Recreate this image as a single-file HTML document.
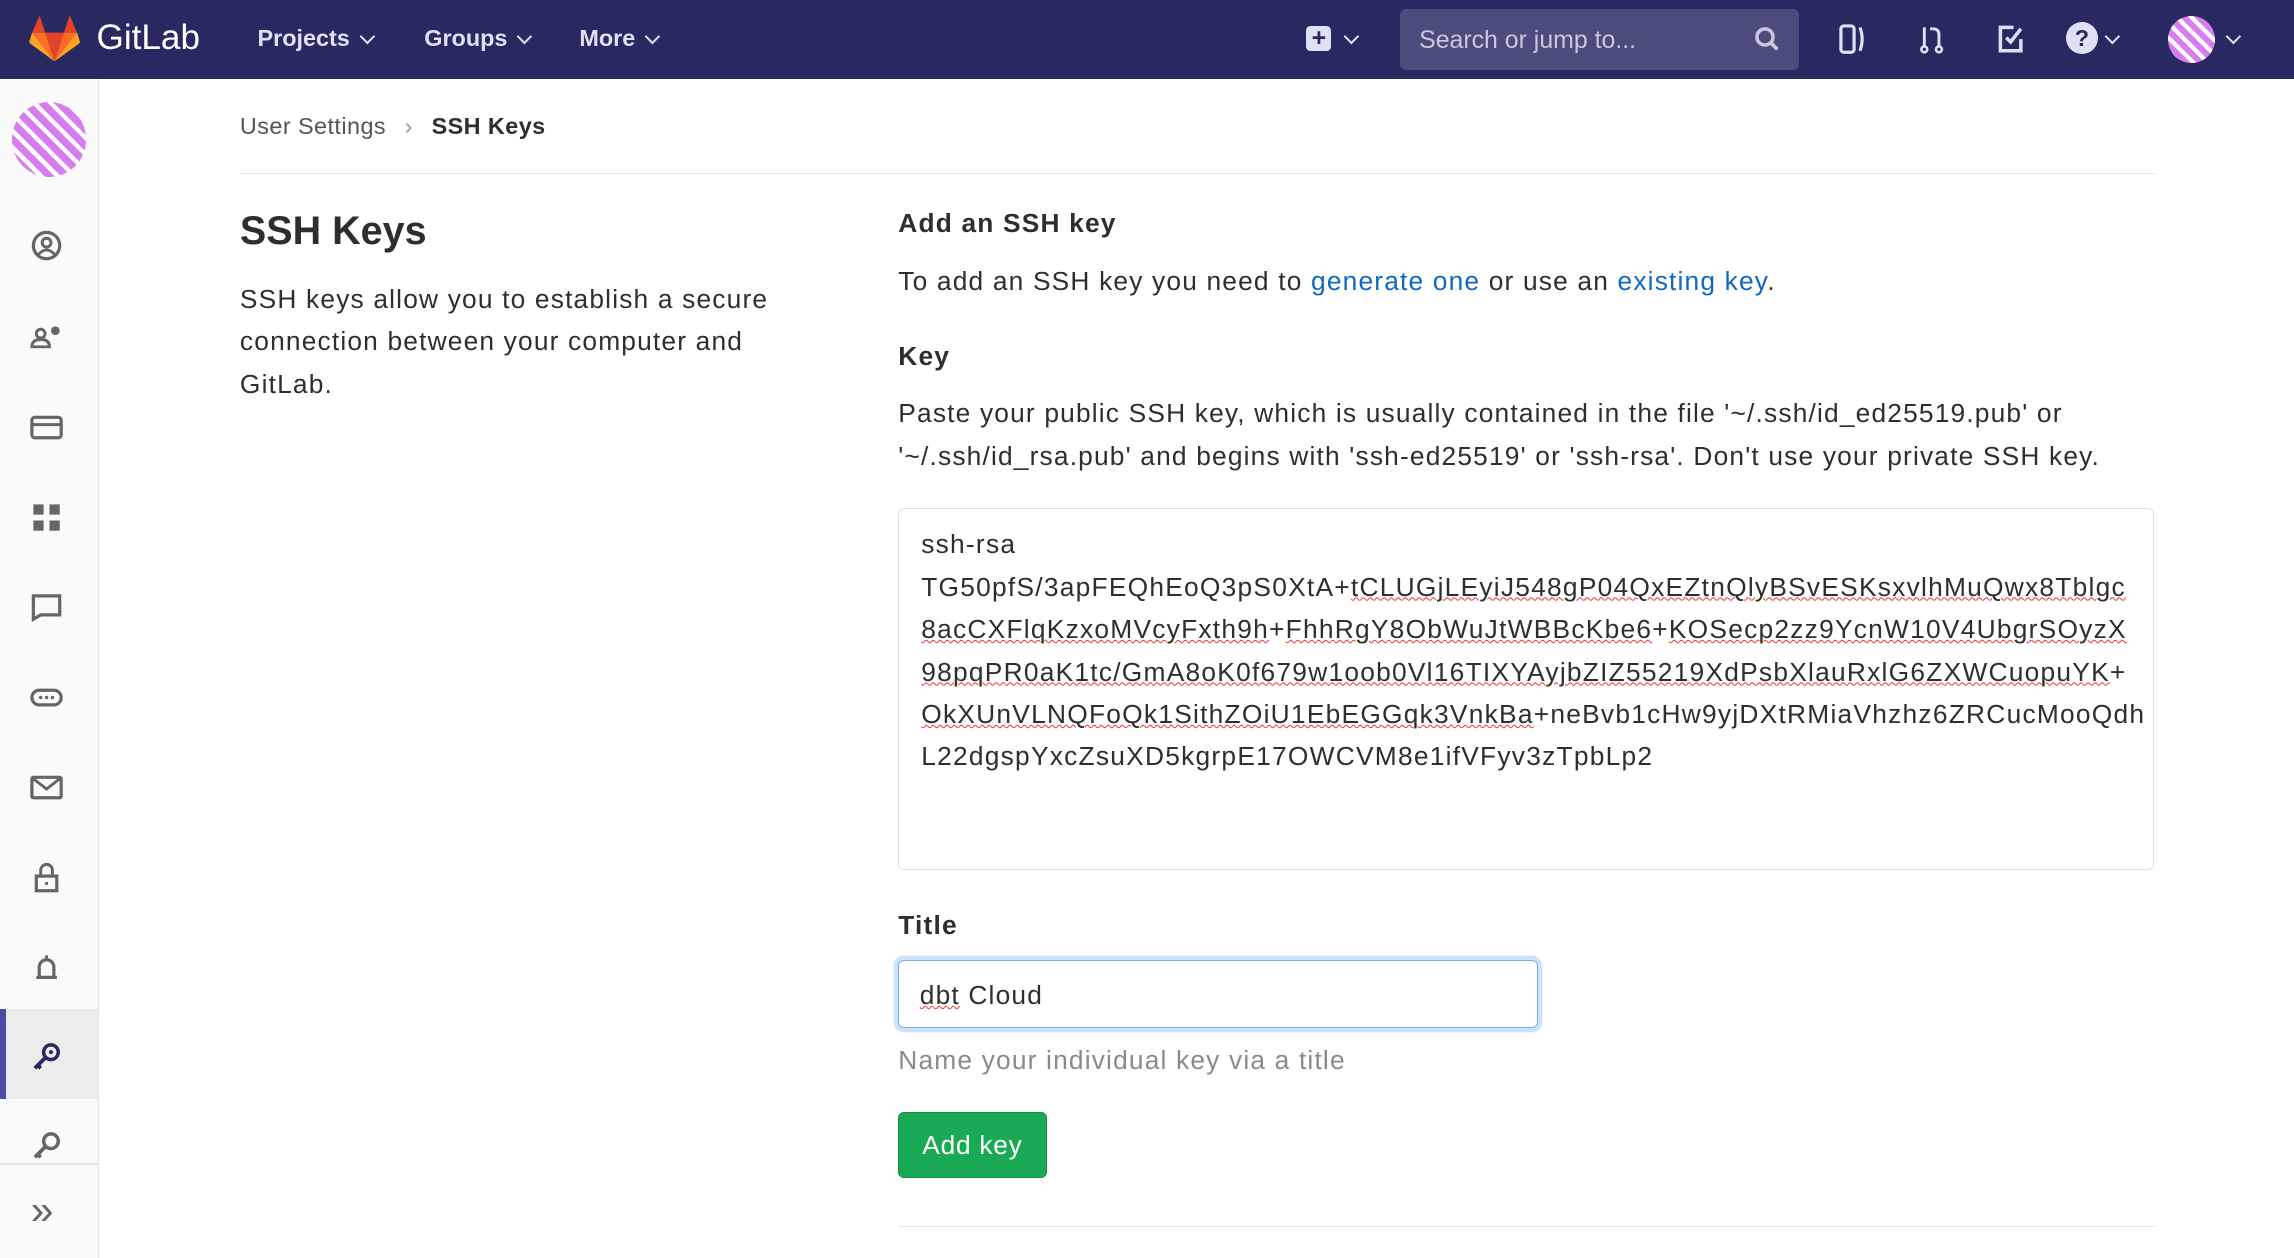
<!DOCTYPE html>
<html><head><meta charset="utf-8"><style>
html,body{margin:0;padding:0;}
body{width:1568px;height:860px;zoom:1.46301;overflow:hidden;font-family:"Liberation Sans",sans-serif;color:#2e2e2e;background:#fff;position:relative;}
.hdr{position:absolute;left:0;top:0;width:1568px;height:54px;background:#292961;color:#fff;}
.hdr .nav{position:absolute;top:17px;font-size:16px;font-weight:bold;color:#e0e0f5;}
.chev{display:inline-block;width:6px;height:6px;border-right:1.6px solid currentColor;border-bottom:1.6px solid currentColor;transform:rotate(45deg);margin-left:8px;position:relative;top:-3px;}
.search{position:absolute;left:957px;top:6px;width:273px;height:42px;background:#4b4b7c;border-radius:4px;}
.search span{position:absolute;left:13px;top:12px;font-size:17px;color:#c8c8dc;}
.side{position:absolute;left:0;top:54px;width:67px;height:806px;background:#fafafa;border-right:1px solid #e5e5e5;}
.ico{position:absolute;left:20px;width:24px;height:24px;}
.crumb{position:absolute;left:164px;top:77px;font-size:16px;color:#555;letter-spacing:0.3px;}
.line{position:absolute;height:1px;background:#e5e5e5;}
h2{position:absolute;left:164px;top:143px;margin:0;font-size:27px;font-weight:bold;}
.p{position:absolute;font-size:18px;line-height:29px;letter-spacing:0.8px;white-space:nowrap;}
a{color:#1068bf;text-decoration:none;}
.ta{position:absolute;left:614px;top:347px;width:857px;height:246px;border:1px solid #dfdfdf;border-radius:4px;}
.ta div{position:absolute;left:15px;top:10px;font-size:18px;line-height:29px;color:#2e2e2e;letter-spacing:0.85px;white-space:nowrap;}
.sq{text-decoration:underline wavy #e33;text-decoration-thickness:1px;}
.inp{position:absolute;left:614px;top:656px;width:436px;height:45px;border:1px solid #73afea;border-radius:4px;box-shadow:0 0 0 3px #cde3f9;}
.btn{position:absolute;left:614px;top:760px;width:100px;height:44px;background:#1aaa55;border:1px solid #168f48;border-radius:4px;color:#fff;font-size:18px;line-height:44px;text-align:center;letter-spacing:0.5px;}
</style></head><body>
<div class="hdr">
 <svg style="position:absolute;left:20px;top:11px" width="35" height="32" viewBox="0 0 36 33"><path d="M18 32L24.6 11.7H11.4Z" fill="#e24329"/><path d="M18 32L11.4 11.7H2.2Z" fill="#fc6d26"/><path d="M2.2 11.7L0.2 17.9a1.4 1.4 0 0 0 .5 1.5L18 32Z" fill="#fca326"/><path d="M2.2 11.7H11.4L7.4 -0.5 Z" fill="#e24329"/><path d="M18 32L24.6 11.7H33.8Z" fill="#fc6d26"/><path d="M33.8 11.7L35.8 17.9a1.4 1.4 0 0 1-.5 1.5L18 32Z" fill="#fca326"/><path d="M33.8 11.7H24.6L28.6 -0.5Z" fill="#e24329"/></svg>
 <div style="position:absolute;left:66px;top:12px;font-size:24px;color:#fff">GitLab</div>
 <div class="nav" style="left:176px">Projects<span class="chev"></span></div>
 <div class="nav" style="left:290px">Groups<span class="chev"></span></div>
 <div class="nav" style="left:396px">More<span class="chev"></span></div>
 <div style="position:absolute;left:893px;top:18px;width:17px;height:17px;background:#e0e0f5;border-radius:3px;color:#292961;font-weight:bold;font-size:17px;line-height:17px;text-align:center">+</div>
 <div class="nav" style="left:912px"><span class="chev"></span></div>
 <div class="search"><span>Search or jump to...</span>
  <svg style="position:absolute;left:242px;top:12px" width="18" height="18" viewBox="0 0 18 18"><circle cx="7.5" cy="7.5" r="5.5" fill="none" stroke="#c8c8dc" stroke-width="2.4"/><path d="M11.5 11.5L16 16" stroke="#c8c8dc" stroke-width="2.6"/></svg></div>
 <svg style="position:absolute;left:1256px;top:16px" width="20" height="22" viewBox="0 0 20 22"><rect x="2" y="2" width="9" height="18" rx="2" fill="none" stroke="#e0e0f5" stroke-width="2.2"/><path d="M15 3q3 8 0 16" fill="none" stroke="#e0e0f5" stroke-width="2.2"/></svg>
 <svg style="position:absolute;left:1310px;top:16px" width="20" height="22" viewBox="0 0 20 22"><circle cx="5" cy="18" r="2" fill="none" stroke="#e0e0f5" stroke-width="1.8"/><circle cx="15" cy="18" r="2" fill="none" stroke="#e0e0f5" stroke-width="1.8"/><path d="M5 3v13M15 16V8q0-4-4-4H9" fill="none" stroke="#e0e0f5" stroke-width="2"/></svg>
 <svg style="position:absolute;left:1364px;top:16px" width="20" height="22" viewBox="0 0 20 22"><path d="M12 3H3v16h14v-8" fill="none" stroke="#e0e0f5" stroke-width="2.4"/><path d="M7 10l3 3 7-9" fill="none" stroke="#e0e0f5" stroke-width="2.4"/></svg>
 <div style="position:absolute;left:1412px;top:15px;width:22px;height:22px;border-radius:50%;background:#e0e0f5;color:#292961;font-weight:bold;font-size:16px;line-height:22px;text-align:center">?</div>
 <div class="nav" style="left:1432px"><span class="chev"></span></div>
 <div style="position:absolute;left:1482px;top:11px;width:32px;height:32px;border-radius:50%;background:repeating-linear-gradient(45deg,#d87cf0 0 4px,#fff 4px 7px),#d87cf0"></div>
 <div class="nav" style="left:1515px"><span class="chev"></span></div>
</div>
<div class="side">
 <div style="position:absolute;left:8px;top:16px;width:51px;height:51px;border-radius:50%;background:repeating-linear-gradient(45deg,#d87cf0 0 5px,#fff 5px 8px),#d87cf0;"></div>
 <svg class="ico" style="top:102px" viewBox="0 0 24 24"><circle cx="12" cy="12" r="9" fill="none" stroke="#666" stroke-width="2.2"/><circle cx="12" cy="10" r="3" fill="none" stroke="#666" stroke-width="2"/><path d="M6.5 18q5.5-6 11 0" fill="none" stroke="#666" stroke-width="2"/></svg>
 <svg class="ico" style="top:164px" viewBox="0 0 24 24"><circle cx="8" cy="10" r="3" fill="none" stroke="#666" stroke-width="2"/><path d="M2 19q0-5 6-5t6 5z" fill="none" stroke="#666" stroke-width="2"/><circle cx="18" cy="8" r="3" fill="#666"/></svg>
 <svg class="ico" style="top:226px" viewBox="0 0 24 24"><rect x="2" y="5" width="20" height="14" rx="2" fill="none" stroke="#666" stroke-width="2.2"/><path d="M2 10h20" stroke="#666" stroke-width="2"/></svg>
 <svg class="ico" style="top:288px" viewBox="0 0 24 24"><rect x="3" y="3" width="7" height="7" fill="#666"/><rect x="14" y="3" width="7" height="7" fill="#666"/><rect x="3" y="14" width="7" height="7" fill="#666"/><rect x="14" y="14" width="7" height="7" fill="#666"/></svg>
 <svg class="ico" style="top:349px" viewBox="0 0 24 24"><path d="M3 4h18v13H8l-5 3z" fill="none" stroke="#666" stroke-width="2.2"/></svg>
 <svg class="ico" style="top:411px" viewBox="0 0 24 24"><rect x="2" y="7" width="20" height="10" rx="5" fill="none" stroke="#666" stroke-width="2.2"/><circle cx="8" cy="12" r="1.2" fill="#666"/><circle cx="12" cy="12" r="1.2" fill="#666"/><circle cx="16" cy="12" r="1.2" fill="#666"/></svg>
 <svg class="ico" style="top:472px" viewBox="0 0 24 24"><rect x="2" y="5" width="20" height="14" rx="1" fill="none" stroke="#666" stroke-width="2.2"/><path d="M3 6l9 7 9-7" fill="none" stroke="#666" stroke-width="2"/></svg>
 <svg class="ico" style="top:534px" viewBox="0 0 24 24"><path d="M8 11V7a4 4 0 0 1 8 0v4" fill="none" stroke="#666" stroke-width="2"/><rect x="5" y="11" width="14" height="10" fill="none" stroke="#666" stroke-width="2.2"/><rect x="11" y="15" width="2" height="2" fill="#666"/></svg>
 <svg class="ico" style="top:596px" viewBox="0 0 24 24"><path d="M5 18h14M7 17V11a5 5 0 0 1 10 0v6" fill="none" stroke="#666" stroke-width="2.2"/><rect x="11" y="3" width="2" height="3" fill="#666"/></svg>
 <div style="position:absolute;left:0;top:636px;width:67px;height:61px;background:#ececec"></div>
 <div style="position:absolute;left:0;top:636px;width:4px;height:61px;background:#4b4ba3"></div>
 <svg class="ico" style="top:656px" viewBox="0 0 24 24"><circle cx="15" cy="9" r="5" fill="none" stroke="#292961" stroke-width="2.4"/><circle cx="15" cy="9" r="1.4" fill="#292961"/><path d="M11 13L4 20M6 18l2 2" stroke="#292961" stroke-width="2.6"/></svg>
 <svg class="ico" style="top:717px" viewBox="0 0 24 24"><circle cx="15" cy="9" r="5" fill="none" stroke="#666" stroke-width="2.4"/><path d="M11 13L4 20M6 18l2 2" stroke="#666" stroke-width="2.6"/></svg>
 <div style="position:absolute;left:0;top:741px;width:67px;height:1px;background:#e5e5e5"></div>
 <div style="position:absolute;left:21px;top:760px;font-size:28px;color:#666;line-height:26px">»</div>
</div>
<div class="crumb">User Settings <span style="color:#999;margin:0 8px">›</span> <b style="color:#2e2e2e">SSH Keys</b></div>
<div class="line" style="left:164px;top:118px;width:1310px"></div>
<h2>SSH Keys</h2>
<div class="p" style="left:164px;top:190px">SSH keys allow you to establish a secure<br>connection between your computer and<br>GitLab.</div>
<div class="p" style="left:614px;top:138px;font-weight:bold">Add an SSH key</div>
<div class="p" style="left:614px;top:178px">To add an SSH key you need to <a>generate one</a> or use an <a>existing key</a>.</div>
<div class="p" style="left:614px;top:229px;font-weight:bold">Key</div>
<div class="p" style="left:614px;top:268px">Paste your public SSH key, which is usually contained in the file '~/.ssh/id_ed25519.pub' or<br>'~/.ssh/id_rsa.pub' and begins with 'ssh-ed25519' or 'ssh-rsa'. Don't use your private SSH key.</div>
<div class="ta"><div>ssh-rsa<br>TG50pfS/3apFEQhEoQ3pS0XtA+<span class="sq">tCLUGjLEyiJ548gP04QxEZtnQlyBSvESKsxvlhMuQwx8Tblgc</span><br><span class="sq">8acCXFlqKzxoMVcyFxth9h</span>+<span class="sq">FhhRgY8ObWuJtWBBcKbe6</span>+<span class="sq">KOSecp2zz9YcnW10V4UbgrSOyzX</span><br><span class="sq">98pqPR0aK1tc/GmA8oK0f679w1oob0Vl16TIXYAyjbZIZ55219XdPsbXlauRxlG6ZXWCuopuYK</span>+<br><span class="sq">OkXUnVLNQFoQk1SithZOiU1EbEGGqk3VnkBa</span>+neBvb1cHw9yjDXtRMiaVhzhz6ZRCucMooQdh<br>L22dgspYxcZsuXD5kgrpE17OWCVM8e1ifVFyv3zTpbLp2</div></div>
<div class="p" style="left:614px;top:618px;font-weight:bold">Title</div>
<div class="inp"><div class="p" style="left:14px;top:9px"><span class="sq">dbt</span> Cloud</div></div>
<div class="p" style="left:614px;top:710px;color:#8a8a8a">Name your individual key via a title</div>
<div class="btn">Add key</div>
<div class="line" style="left:614px;top:838px;width:860px"></div>
</body></html>
